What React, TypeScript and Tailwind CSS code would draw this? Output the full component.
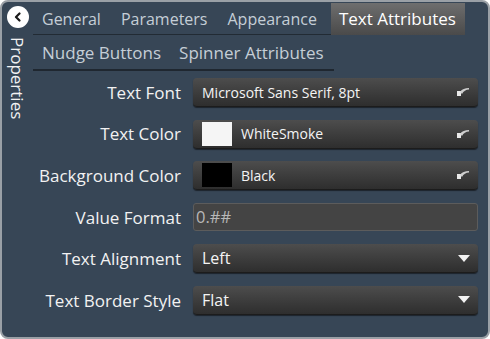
import React from "react";

const font = { fontFamily: "'Open Sans', 'Noto Sans', sans-serif" };

function Grip() {
  return (
    <svg width="14" height="10" viewBox="0 0 14 10" className="shrink-0">
      <path d="M1 4 L5 4 L5 9 L1 9 Z" fill="#e8e8e8" />
      <path d="M4 5 C6 2 9 1 13 1 L13 2.5 C10 2.5 7.5 4 6 7 Z" fill="#cfcfcf" />
    </svg>
  );
}

function Arrow() {
  return (
    <svg width="12" height="7" viewBox="0 0 12 7" className="shrink-0">
      <path d="M0 0 L12 0 L6 7 Z" fill="#f2f2f2" />
    </svg>
  );
}

function Box({ children, right }: { children: React.ReactNode; right: React.ReactNode }) {
  return (
    <div className="h-[29px] flex-1 flex items-center rounded-[4px] bg-gradient-to-b from-[#4d4d4d] to-[#2e2e2e] border-b border-[#1c1c1c] shadow-[0_1px_1px_rgba(0,0,0,0.5)] pl-[9px] pr-[8px]">
      <div className="flex-1 flex items-center text-[#f4f4f4]">{children}</div>
      {right}
    </div>
  );
}

function Row({ label, children }: { label: string; children: React.ReactNode }) {
  return (
    <div className="flex items-center h-[29px]">
      <div className="w-[160px] text-right pr-[12px] text-[17px] text-[#f2f2f2] whitespace-nowrap">{label}</div>
      {children}
    </div>
  );
}

export default function App() {
  return (
    <div className="w-[490px] h-[339px] bg-white" style={font}>
      <div className="w-full h-full rounded-[8px] border-2 border-[#9aa0a6] bg-[#374656] flex overflow-hidden">
        <div className="w-[31px] flex flex-col items-center pt-[4px]">
          <div className="w-[22px] h-[22px] rounded-full bg-white flex items-center justify-center">
            <svg width="10" height="10" viewBox="0 0 10 10">
              <path d="M6.5 1.5 L3 5 L6.5 8.5" stroke="#1a1a1a" strokeWidth="2.2" fill="none" strokeLinecap="round" strokeLinejoin="round" />
            </svg>
          </div>
          <div className="mt-[9px] text-[17px] text-[#f2f2f2] leading-none" style={{ writingMode: "vertical-rl" }}>
            Properties
          </div>
        </div>
        <div className="flex-1 flex flex-col pr-[10px]">
          <div className="flex mt-[1px] h-[32px] text-[16px] text-[#c5ced6]">
            <div className="pl-[9px] pr-[10px] flex items-center border-b border-[#222b34]">General</div>
            <div className="px-[10px] flex items-center border-b border-[#222b34]">Parameters</div>
            <div className="pl-[10px] pr-[14px] flex items-center border-b border-[#222b34]">Appearance</div>
            <div className="pl-[8px] pr-[9px] flex items-center bg-gradient-to-b from-[#6e6e6e] to-[#4a4a4a] text-white text-[17px]">Text Attributes</div>
          </div>
          <div className="flex mt-[2px] h-[34px] text-[17px] text-[#c5ced6]">
            <div className="pl-[9px] pr-[9px] flex items-center border-b-2 border-[#1f2730]">Nudge Buttons</div>
            <div className="pl-[9px] pr-[10px] flex items-center border-b-2 border-[#1f2730]">Spinner Attributes</div>
          </div>
          <div className="flex flex-col gap-[12.6px] mt-[7px]">
            <Row label="Text Font">
              <Box right={<Grip />}>
                <span className="text-[14px]">Microsoft Sans Serif, 8pt</span>
              </Box>
            </Row>
            <Row label="Text Color">
              <Box right={<Grip />}>
                <div className="w-[30px] h-[24px] bg-[#f5f5f5]" />
                <span className="text-[14px] ml-[9px]">WhiteSmoke</span>
              </Box>
            </Row>
            <Row label="Background Color">
              <Box right={<Grip />}>
                <div className="w-[30px] h-[24px] bg-black" />
                <span className="text-[14px] ml-[9px]">Black</span>
              </Box>
            </Row>
            <Row label="Value Format">
              <div className="h-[28px] flex-1 flex items-center rounded-[3px] bg-[#444444] border border-[#5c5c5c] pl-[2px] text-[16.5px] text-[#b8b8b8]">
                0.##
              </div>
            </Row>
            <Row label="Text Alignment">
              <Box right={<Arrow />}>
                <span className="text-[16px]">Left</span>
              </Box>
            </Row>
            <Row label="Text Border Style">
              <Box right={<Arrow />}>
                <span className="text-[16px]">Flat</span>
              </Box>
            </Row>
          </div>
        </div>
      </div>
    </div>
  );
}
